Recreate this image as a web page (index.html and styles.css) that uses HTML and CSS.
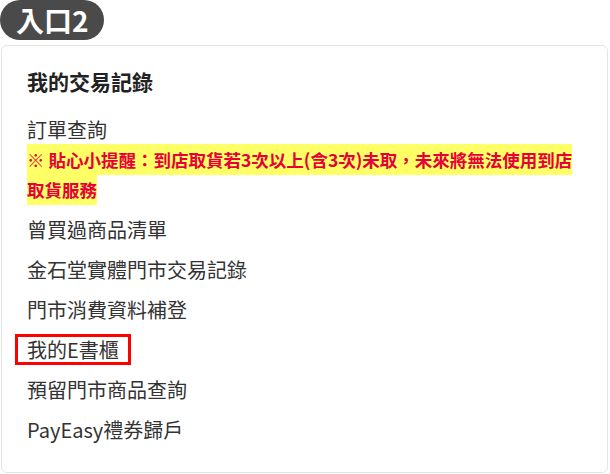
FILE: index.html
```html
<!DOCTYPE html>
<html lang="zh-Hant">
<head>
  <meta charset="UTF-8" />
  <meta name="viewport" content="width=device-width, initial-scale=1.0" />
  <title>入口2</title>
  <link rel="stylesheet" href="styles.css">
</head>
<body>
  <div class="badge">入口2</div>

  <div class="card">
    <h2>我的交易記錄</h2>
    <ul class="menu">
      <li class="order">
        <span class="order-title">訂單查詢</span>
        <p class="notice"><span>※ 貼心小提醒：到店取貨若3次以上(含3次)未取，未來將無法使用到店取貨服務</span></p>
      </li>
      <li>曾買過商品清單</li>
      <li>金石堂實體門市交易記錄</li>
      <li>門市消費資料補登</li>
      <li><span class="marked">我的E書櫃</span></li>
      <li>預留門市商品查詢</li>
      <li>PayEasy禮券歸戶</li>
    </ul>
  </div>
</body>
</html>
```

FILE: styles.css
```css
body {
  margin: 0;
  font-family: "Noto Sans CJK TC", "Noto Sans", sans-serif;
  background: #fff;
  color: #333;
}

.badge {
  display: inline-block;
  height: 40px;
  line-height: 40px;
  padding: 0 15px 0 16px;
  background: #4a4a4a;
  color: #fff;
  font-size: 28px;
  font-weight: bold;
  border-radius: 20px;
}

.card {
  margin: 5px 2px 2px 1px;
  padding: 15px 25px 22px;
  border: 1px solid #e4e4e4;
  border-radius: 6px;
}

h2 {
  margin: 0 0 9px;
  font-size: 21px;
  line-height: 40px;
  color: #222;
}

.menu {
  list-style: none;
  margin: 0;
  padding: 0;
  font-size: 20px;
  line-height: 40px;
}

.order {
  padding: 5px 0;
}

.order-title {
  display: block;
  line-height: 30px;
}

.notice {
  margin: 0;
  font-size: 17.5px;
  font-weight: bold;
  line-height: 30px;
  color: #e6003a;
}

.notice span {
  background: #ffff66;
  padding: 3px 0;
}

.marked {
  display: inline-block;
  margin-left: -12px;
  padding: 0 9px;
  line-height: 25px;
  border: 3px solid #f00;
}
```
